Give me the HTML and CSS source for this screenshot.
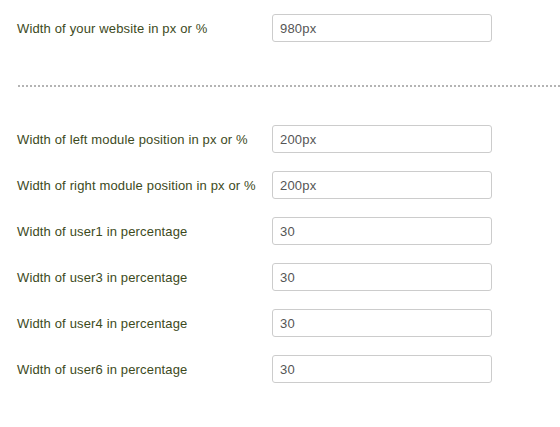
FILE: index.html
```html
<!DOCTYPE html>
<html lang="en">
<head>
  <meta charset="UTF-8">
  <title>Layout settings</title>
  <link rel="stylesheet" href="styles.css">
</head>
<body>

<div class="settings">
  <div class="row">
    <label for="site-width">Width of your website in px or %</label>
    <input type="text" id="site-width" value="980px">
  </div>

  <div class="spacer"></div>

  <div class="row">
    <label for="left-width">Width of left module position in px or %</label>
    <input type="text" id="left-width" value="200px">
  </div>

  <div class="row">
    <label for="right-width">Width of right module position in px or %</label>
    <input type="text" id="right-width" value="200px">
  </div>

  <div class="row">
    <label for="user1">Width of user1 in percentage</label>
    <input type="text" id="user1" value="30">
  </div>

  <div class="row">
    <label for="user3">Width of user3 in percentage</label>
    <input type="text" id="user3" value="30">
  </div>

  <div class="row">
    <label for="user4">Width of user4 in percentage</label>
    <input type="text" id="user4" value="30">
  </div>

  <div class="row">
    <label for="user6">Width of user6 in percentage</label>
    <input type="text" id="user6" value="30">
  </div>
</div>

</body>
</html>
```

FILE: styles.css
```css
body {
  margin: 0;
  background: #fff;
  font-family: "Liberation Sans", Arial, sans-serif;
}

.settings {
  padding: 14px 0 0 17px;
}

.row {
  display: flex;
  align-items: center;
  height: 28px;
  margin-bottom: 18px;
}

label {
  width: 255px;
  color: #3d4a1c;
  font-size: 13px;
  letter-spacing: 0.15px;
}

input {
  box-sizing: border-box;
  width: 220px;
  height: 28px;
  padding: 0 7px;
  border: 1px solid #ccc;
  border-radius: 3px;
  color: #555;
  font-family: "Liberation Sans", Arial, sans-serif;
  font-size: 13px;
  letter-spacing: 0.2px;
}

/* Separator between site width and columns */
.spacer {
  height: 25px;
  margin-left: 1px;
  border-bottom: 2px dotted #b4b4b4;
  margin-bottom: 38px;
}
```
